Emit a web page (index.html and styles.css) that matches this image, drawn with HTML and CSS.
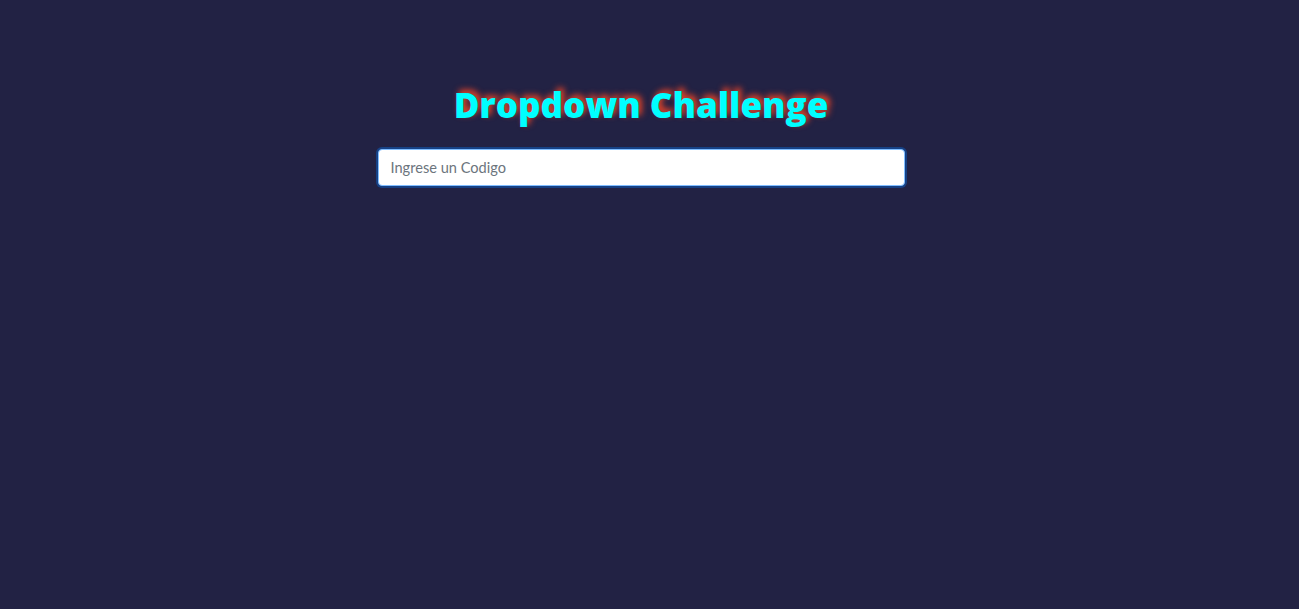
FILE: index.html
```html
<!DOCTYPE html>
<html lang="es">
<head>
<meta charset="utf-8">
<title>Dropdown Challenge</title>
<link rel="stylesheet" href="styles.css">
</head>
<body>
<main class="page">
  <h1 class="title">Dropdown Challenge</h1>
  <input class="code-input" type="text" placeholder="Ingrese un Codigo" autofocus>
</main>
</body>
</html>
```
FILE: styles.css
```css
html, body {
  margin: 0;
  padding: 0;
  background: #222244;
  height: 100%;
}
body {
  font-family: "Open Sans", "Noto Sans", sans-serif;
}
.page {
  display: flex;
  flex-direction: column;
  align-items: center;
  padding: 83px 17px 0 0;
}
.title {
  margin: 0 0 23px;
  font-size: 35px;
  font-weight: 800;
  line-height: 43px;
  color: #00ffff;
  letter-spacing: 0;
  text-shadow: 3px -3px 6px rgba(255, 72, 36, 0.95);
}
.code-input {
  box-sizing: border-box;
  width: 527px;
  height: 37px;
  padding: 6px 12px;
  font-family: "Lato", "Noto Sans", sans-serif;
  font-size: 14.6px;
  color: #495057;
  background: #fff;
  border: 1px solid #80bdff;
  border-radius: 4px;
  outline: none;
  box-shadow: 0 0 0 2px rgba(0, 123, 255, 0.35);
}
.code-input::placeholder {
  color: #6c757d;
}
```
